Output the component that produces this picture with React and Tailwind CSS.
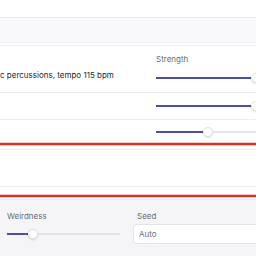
import React from 'react';

const Slider = ({ filled, rest = 0 }) => {
  return (
    <div className="flex items-center h-[10px]">
      <div className="h-[2px] bg-[#4c4fa3] shrink-0" style={{ width: filled }} />
      <div className="w-[10px] h-[10px] shrink-0 rounded-full bg-white border border-[#e3e3ea] shadow-sm" />
      <div className="h-[2px] bg-[#e6e4f2] shrink-0" style={{ width: rest }} />
    </div>
  );
};

const App = () => {
  return (
    <div className="w-[256px] h-[256px] overflow-hidden bg-white font-['Inter',sans-serif] text-[8px] leading-[10px]">
      {/* top bar */}
      <div className="h-[17px]" />
      <div className="h-[26px] border-y border-[#ececf1] bg-[#f9f9fb]" />
      <div className="h-[2px]" />

      {/* prompt rows */}
      <div className="border-t border-[#ececf1]">
        <div className="flex h-[47px] border-b border-[#ececf1]">
          <div className="w-[156px] shrink-0 pt-[24px] text-[#26262c] whitespace-nowrap overflow-hidden">
            c percussions, tempo 115 bpm
          </div>
          <div className="pt-[8px]">
            <div className="text-[#6b6b76]">Strength</div>
            <div className="mt-[9px]">
              <Slider filled={95} />
            </div>
          </div>
        </div>
        <div className="flex h-[27px] border-b border-[#ececf1]">
          <div className="w-[156px] shrink-0" />
          <div className="flex items-center">
            <Slider filled={95} />
          </div>
        </div>
        <div className="flex h-[23px]">
          <div className="w-[156px] shrink-0" />
          <div className="flex items-center">
            <Slider filled={47} rest={60} />
          </div>
        </div>
      </div>

      {/* red bordered box */}
      <div className="h-[2px] bg-[#dc3224] shadow-[0_0_0_1px_#f6c9c3]" />
      <div className="h-[4px]" />
      <div className="h-[38px] border-y border-[#ececf1]" />
      <div className="h-[8px]" />
      <div className="h-[2px] bg-[#dc3224] shadow-[0_0_0_1px_#f6c9c3]" />
      <div className="h-[3px] border-b border-[#ececf1]" />

      {/* settings panel */}
      <div className="bg-[#f5f5f7] h-[60px] flex pl-[7px] pt-[11px] gap-[13px]">
        <div className="w-[113px] shrink-0">
          <div className="text-[#6b6b76]">Weirdness</div>
          <div className="mt-[8px] flex items-center h-[10px]">
            <div className="h-[2px] w-[21px] bg-[#4c4fa3]" />
            <div className="w-[10px] h-[10px] shrink-0 rounded-full bg-white border border-[#e3e3ea] shadow-sm" />
            <div className="h-[2px] w-[82px] bg-[#e1e1e8]" />
          </div>
        </div>
        <div className="flex-1 min-w-0">
          <div className="pl-[4px] text-[#6b6b76]">Seed</div>
          <div className="mt-[3px] w-[140px] h-[20px] flex items-center pl-[5px] rounded-[3px] border border-[#e3e3ea] bg-white text-[#6b6b76]">
            Auto
          </div>
        </div>
      </div>
    </div>
  );
};

export default App;
